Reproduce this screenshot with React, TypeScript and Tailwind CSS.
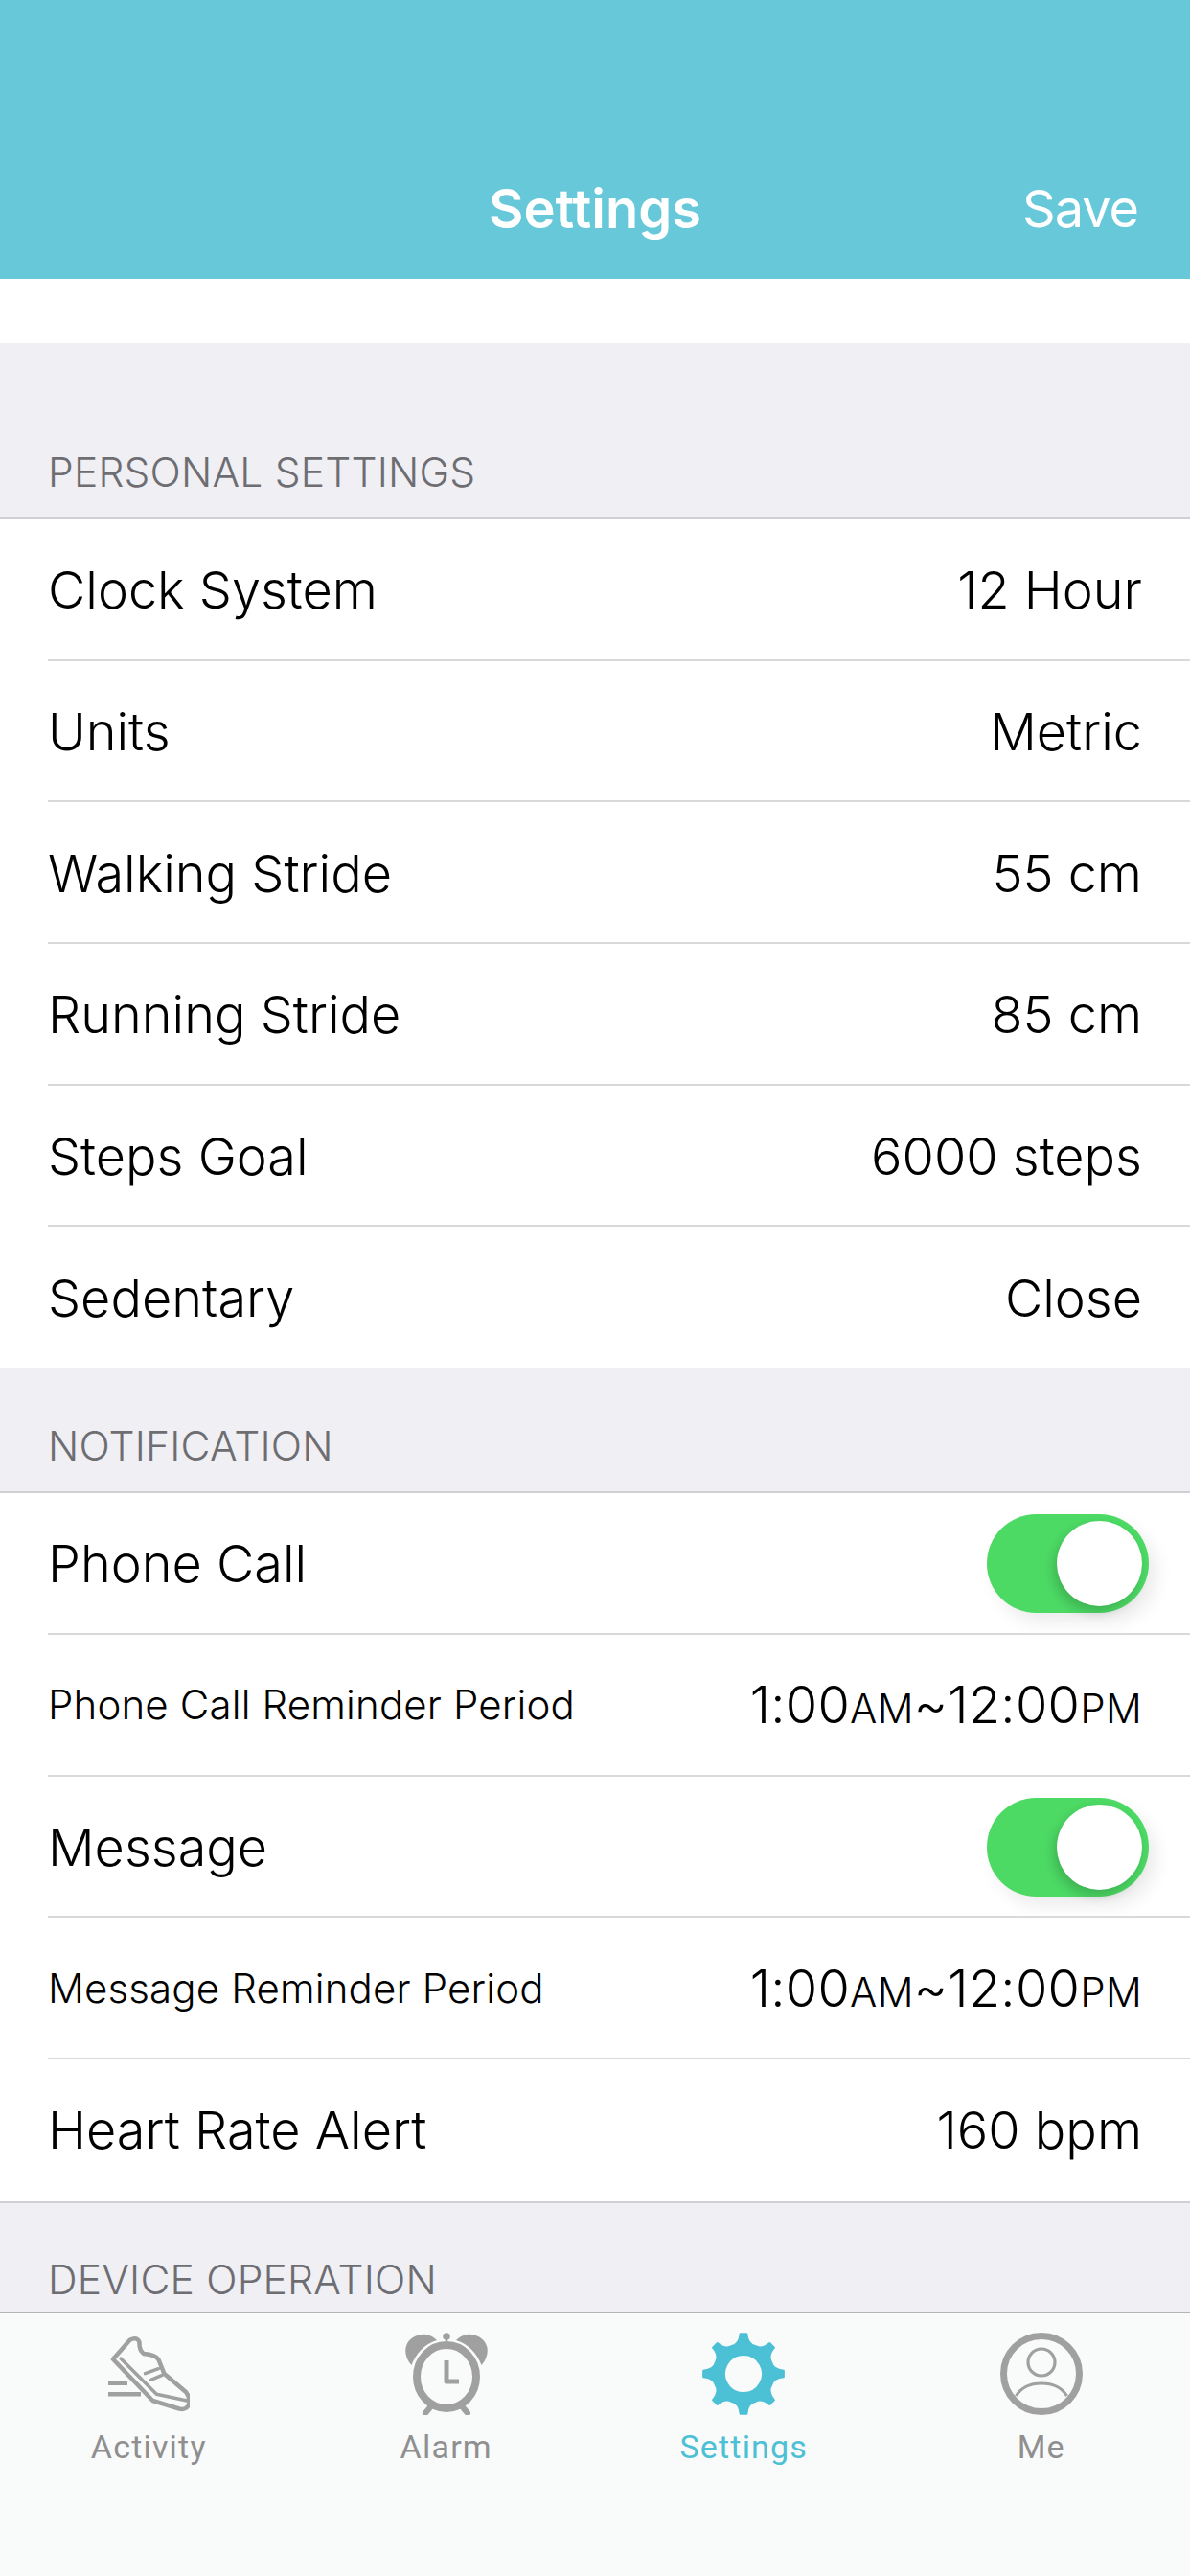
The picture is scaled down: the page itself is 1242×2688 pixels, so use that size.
import React from 'react';

const FONT = 'font-[Inter,"Liberation_Sans",sans-serif]';

// gear outline built from polar points, 8 teeth
const gearPath = () => {
  const pt = (r: number, deg: number) => {
    const a = ((deg - 90) * Math.PI) / 180;
    return `${(43 + r * Math.cos(a)).toFixed(2)} ${(43 + r * Math.sin(a)).toFixed(2)}`;
  };
  let d = '';
  for (let i = 0; i < 8; i++) {
    const a = i * 45;
    d += `${i === 0 ? 'M' : 'L'}${pt(42, a - 4.5)} L${pt(42, a + 4.5)} `;
    d += `Q${pt(31, a + 8)} ${pt(31.5, a + 22.5)} Q${pt(31, a + 37)} ${pt(42, a + 40.5)} `;
  }
  return d + 'Z M43 23 a20 20 0 1 0 0.01 0 Z';
};

const ShoeIcon = () => (
  <svg viewBox="0 0 86 86" className="h-[86px] w-[86px]" fill="none" stroke="#a0a0a0" strokeWidth="4.5" strokeLinejoin="round" strokeLinecap="round">
    <path d="M6 27.7 L23.6 7.7 Q31 4 33.5 10 Q33 18 38 22 Q50 23 53.4 28 L59.3 42.7 L82 62 Q88 70 84 77 Q81 81 75 79.5 L47.4 71 Z" />
    <path d="M14 27 L51.4 64.3 L83 71" strokeWidth="3.5" />
    <path d="M39.5 42.7 L53.4 37.7 M45.4 49.3 L57.3 44.3" strokeWidth="3.5" />
    <path d="M1 52.7 H21 M1 64.3 H35" strokeLinecap="butt" />
  </svg>
);

const AlarmIcon = () => (
  <svg viewBox="0 0 86 86" className="h-[86px] w-[86px]" fill="none" stroke="#a0a0a0">
    <ellipse cx="43" cy="46" rx="31" ry="33" strokeWidth="8" />
    <path d="M6.5 34 C1 28 -1 20 1 14 C4 5 14 1 22 2 C27 3 30 5 33 8 C20 12 11 22 6.5 34Z" fill="#a0a0a0" stroke="none" />
    <path d="M79.5 34 C85 28 87 20 85 14 C82 5 72 1 64 2 C59 3 56 5 53 8 C66 12 75 22 79.5 34Z" fill="#a0a0a0" stroke="none" />
    <circle cx="43" cy="4" r="3.8" fill="#a0a0a0" stroke="none" />
    <path d="M43 6 V13" strokeWidth="2.5" />
    <path d="M43 29 V51 H56" strokeWidth="5" strokeLinejoin="round" />
    <path d="M26 78 L21 84 M60 78 L65 84" strokeWidth="6" strokeLinecap="round" />
  </svg>
);

const GearIcon = () => (
  <svg viewBox="0 0 86 86" className="h-[86px] w-[86px]">
    <path d={gearPath()} fill="#4cc0d5" fillRule="evenodd" stroke="#4cc0d5" strokeWidth="2" strokeLinejoin="round" />
  </svg>
);

const MeIcon = () => (
  <svg viewBox="0 0 86 86" className="h-[86px] w-[86px]" fill="none" stroke="#a0a0a0">
    <circle cx="43" cy="43" r="39.5" strokeWidth="7" />
    <circle cx="43" cy="31" r="14" strokeWidth="3.2" />
    <path d="M16.5 66 C22 57 32 53 43 53 C54 53 64 57 69.5 66" strokeWidth="3.2" />
  </svg>
);

const Toggle = () => (
  <div className="relative -mr-[7px] h-[103px] w-[169px] rounded-full bg-[#4cd964] shadow-[8px_10px_18px_rgba(0,0,0,0.08)]">
    <div className="absolute right-[7px] top-[7px] h-[89px] w-[89px] rounded-full bg-white shadow-[-3px_6px_12px_rgba(0,0,0,0.18)]" />
  </div>
);

const Period = () => (
  <span className="pb-[2px] text-[54px] font-light tracking-[0.3px] text-black">
    1:00<span className="text-[42px]">AM</span>~12:00<span className="text-[42px]">PM</span>
  </span>
);

type RowData = { label: string; value?: React.ReactNode; small?: boolean };

const Row = ({ label, value, small, last }: RowData & { last: boolean }) => (
  <div className="relative flex h-[147.7px] items-center justify-between bg-white pl-[50px] pr-[50px]">
    <span className={small ? 'pb-[2px] text-[42px] font-light tracking-[0.15px] text-black' : 'text-[54px] font-light text-black'}>{label}</span>
    {typeof value === 'string' ? <span className="text-[54px] font-light text-black">{value}</span> : value}
    {!last && <div className="absolute bottom-0 left-[50px] right-0 h-[2px] bg-[#d9d9dc]" />}
  </div>
);

const Section = ({ title, height, rows }: { title: string; height: string; rows: RowData[] }) => (
  <section>
    <div className={`flex items-end border-b-2 border-[#d0d0d4] pb-[19px] pl-[50px] text-[42.5px] font-light leading-[56px] tracking-[0.2px] text-[#6d6d72] ${height}`}>
      {title}
    </div>
    {rows.map((r, i) => (
      <Row key={r.label} {...r} last={i === rows.length - 1} />
    ))}
  </section>
);

const personal: RowData[] = [
  { label: 'Clock System', value: '12 Hour' },
  { label: 'Units', value: 'Metric' },
  { label: 'Walking Stride', value: '55 cm' },
  { label: 'Running Stride', value: '85 cm' },
  { label: 'Steps Goal', value: '6000 steps' },
  { label: 'Sedentary', value: 'Close' },
];

const notification: RowData[] = [
  { label: 'Phone Call', value: <Toggle /> },
  { label: 'Phone Call Reminder Period', value: <Period />, small: true },
  { label: 'Message', value: <Toggle /> },
  { label: 'Message Reminder Period', value: <Period />, small: true },
  { label: 'Heart Rate Alert', value: '160 bpm' },
];

const tabs = [
  { label: 'Activity', icon: <ShoeIcon /> },
  { label: 'Alarm', icon: <AlarmIcon /> },
  { label: 'Settings', icon: <GearIcon />, active: true },
  { label: 'Me', icon: <MeIcon /> },
];

export default function App() {
  return (
    <div className={`flex h-[2688px] w-[1242px] flex-col overflow-hidden bg-[#efeff4] ${FONT}`}>
      {/* Header */}
      <header className="relative flex h-[291px] shrink-0 items-end justify-center bg-[#66c8d9] pb-[41px]">
        <span className="text-[56px] font-semibold leading-[64px] text-white">Settings</span>
        <span className="absolute bottom-[41px] right-[54px] text-[54px] font-normal leading-[64px] tracking-[-1px] text-white">Save</span>
      </header>
      <div className="h-[67px] shrink-0 bg-white" />

      {/* List */}
      <main className="min-h-0 flex-1 overflow-hidden">
        <Section title="PERSONAL SETTINGS" height="h-[184px]" rows={personal} />
        <Section title="NOTIFICATION" height="h-[130px]" rows={notification} />
        <div className="flex h-[117px] items-end border-t-2 border-[#d0d0d4] pb-[7px] pl-[50px] text-[42.5px] font-light leading-[56px] tracking-[0.2px] text-[#6d6d72]">
          DEVICE OPERATION
        </div>
      </main>

      {/* Tab bar */}
      <nav className="grid h-[276px] shrink-0 grid-cols-4 border-t-2 border-[#b4b4b8] bg-[#f9fafa] pt-[20px]">
        {tabs.map((t) => (
          <div key={t.label} className="flex flex-col items-center">
            {t.icon}
            <span className={`mt-[13px] font-[Roboto,sans-serif] text-[34px] leading-[40px] tracking-[1.2px] ${t.active ? 'text-[#4cc0d5]' : 'text-[#8f8f8f]'}`}>
              {t.label}
            </span>
          </div>
        ))}
      </nav>
    </div>
  );
}
